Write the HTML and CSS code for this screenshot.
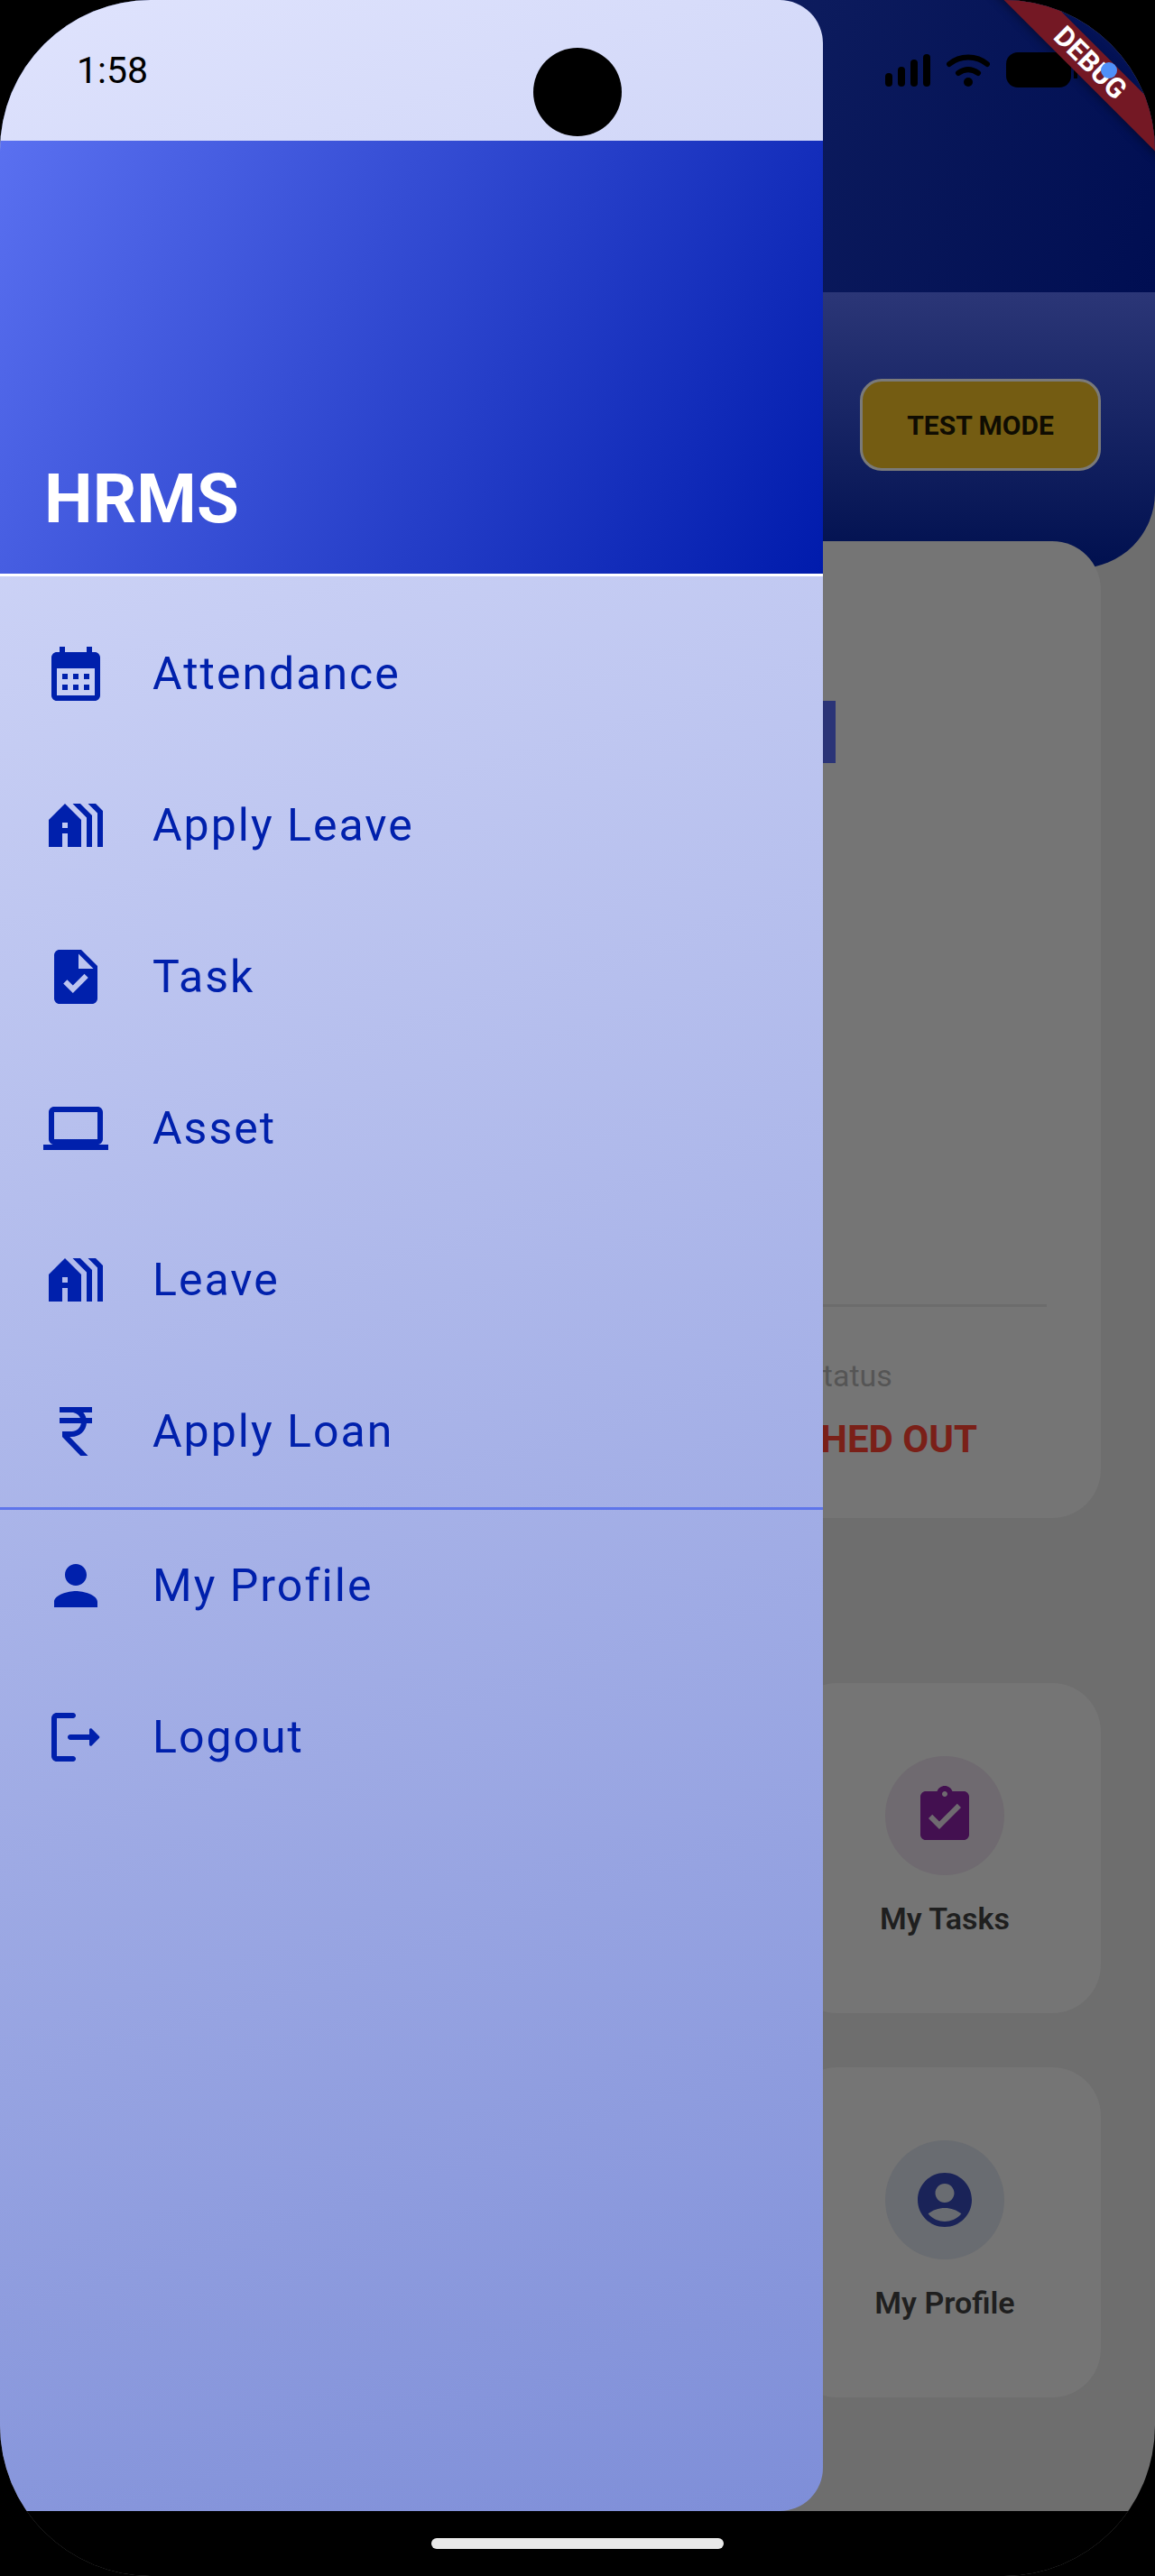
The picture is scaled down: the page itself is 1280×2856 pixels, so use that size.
FILE: index.html
```html
<!DOCTYPE html>
<html lang="en">
<head>
    <meta charset="UTF-8">
    <meta name="viewport" content="width=device-width, initial-scale=1.0">
    <title>HRMS</title>
    <link rel="stylesheet" href="styles.css">
</head>
<body>
    <div class="screen">
        <!-- page behind the drawer -->
        <div class="app">
            <div class="app-top"></div>
            <div class="app-sub">
                <div class="test-mode">TEST MODE</div>
            </div>
            <div class="main-card">
                <div class="card-accent"></div>
                <div class="card-divider"></div>
                <div class="card-status">
                    <div class="status-col">
                        <span class="status-label">Status</span>
                        <span class="status-value">PUNCHED OUT</span>
                    </div>
                </div>
            </div>
            <div class="tiles">
                <div class="tile"></div>
                <div class="tile">
                    <div class="tile-circle circle-purple">
                        <svg class="icon" viewBox="0 0 24 24"><path d="M19 3h-4.18C14.4 1.84 13.3 1 12 1c-1.3 0-2.4.84-2.82 2H5c-1.1 0-2 .9-2 2v14c0 1.1.9 2 2 2h14c1.1 0 2-.9 2-2V5c0-1.1-.9-2-2-2zm-7 0c.55 0 1 .45 1 1s-.45 1-1 1-1-.45-1-1 .45-1 1-1zm-2 14l-4-4 1.41-1.41L10 14.17l6.59-6.59L18 9l-8 8z"/></svg>
                    </div>
                    <span class="tile-label">My Tasks</span>
                </div>
                <div class="tile"></div>
                <div class="tile">
                    <div class="tile-circle circle-navy">
                        <svg class="icon" viewBox="0 0 24 24"><path d="M12 2C6.48 2 2 6.48 2 12s4.48 10 10 10 10-4.48 10-10S17.52 2 12 2zm0 4c1.93 0 3.5 1.57 3.5 3.5S13.93 13 12 13s-3.5-1.57-3.5-3.5S10.07 6 12 6zm0 14c-2.03 0-4.43-.82-6.14-2.88C7.55 15.8 9.68 15 12 15s4.45.8 6.14 2.12C16.43 19.18 14.03 20 12 20z"/></svg>
                    </div>
                    <span class="tile-label">My Profile</span>
                </div>
            </div>
        </div>

        <!-- status bar icons on the right -->
        <div class="status-icons">
            <div class="signal">
                <span class="bar bar-1"></span>
                <span class="bar bar-2"></span>
                <span class="bar bar-3"></span>
                <span class="bar bar-4"></span>
            </div>
            <svg class="wifi" viewBox="0 0 48 36">
                <path class="wifi-arc" d="M3 11C15 1 33 1 45 11"/>
                <path class="wifi-arc" d="M13 21C20 16 28 16 35 21"/>
                <circle cx="24" cy="31" r="5"/>
            </svg>
            <div class="battery"></div>
            <div class="battery-nub"></div>
        </div>

        <aside class="drawer">
            <div class="drawer-status">
                <span class="time">1:58</span>
            </div>
            <div class="drawer-header">
                <h1>HRMS</h1>
            </div>
            <div class="header-line"></div>
            <ul class="menu">
                <li>
                    <svg class="icon" viewBox="0 0 24 24"><path d="M19 4h-1V2h-2v2H8V2H6v2H5c-1.1 0-2 .9-2 2v14c0 1.1.9 2 2 2h14c1.1 0 2-.9 2-2V6c0-1.1-.9-2-2-2zm0 16H5V10h14v10zM9 14H7v-2h2v2zm4 0h-2v-2h2v2zm4 0h-2v-2h2v2zm-8 4H7v-2h2v2zm4 0h-2v-2h2v2zm4 0h-2v-2h2v2z"/></svg>
                    <span>Attendance</span>
                </li>
                <li>
                    <svg class="icon" viewBox="0 0 24 24"><path d="M8 4l-6 6v10h5v-5h2v5h5V10L8 4zm1 9H7v-2h2v2zM18 20V8.34L13.66 4h-2.83L16 9.17V20h2zM22 20V6.66L19.34 4h-2.83L20 7.49V20h2z"/></svg>
                    <span>Apply Leave</span>
                </li>
                <li>
                    <svg class="icon" viewBox="0 0 24 24"><path d="M14 2H6c-1.1 0-1.99.9-1.99 2L4 20c0 1.1.89 2 1.99 2H18c1.1 0 2-.9 2-2V8l-6-6zm-3.06 16L7.4 14.46l1.41-1.41 2.12 2.12 4.24-4.24 1.41 1.41L10.94 18zM13 9V3.5L18.5 9H13z"/></svg>
                    <span>Task</span>
                </li>
                <li>
                    <svg class="icon" viewBox="0 0 24 24"><path d="M20 18c1.1 0 1.99-.9 1.99-2L22 6c0-1.1-.9-2-2-2H4c-1.1 0-2 .9-2 2v10c0 1.1.9 2 2 2H0v2h24v-2h-4zM4 6h16v10H4V6z"/></svg>
                    <span>Asset</span>
                </li>
                <li>
                    <svg class="icon" viewBox="0 0 24 24"><path d="M8 4l-6 6v10h5v-5h2v5h5V10L8 4zm1 9H7v-2h2v2zM18 20V8.34L13.66 4h-2.83L16 9.17V20h2zM22 20V6.66L19.34 4h-2.83L20 7.49V20h2z"/></svg>
                    <span>Leave</span>
                </li>
                <li>
                    <svg class="icon" viewBox="0 0 24 24"><path d="M13.66 7C13.1 5.82 11.9 5 10.5 5H6V3h12v2h-3.26c.48.58.84 1.26 1.05 2H18v2h-2.02c-.25 2.8-2.61 5-5.48 5h-.73l6.73 7h-2.77L7 14v-2h3.5c1.76 0 3.22-1.3 3.46-3H6V7h7.66z"/></svg>
                    <span>Apply Loan</span>
                </li>
            </ul>
            <div class="menu-line"></div>
            <ul class="menu menu-bottom">
                <li>
                    <svg class="icon" viewBox="0 0 24 24"><path d="M12 12c2.21 0 4-1.79 4-4s-1.79-4-4-4-4 1.79-4 4 1.79 4 4 4zm0 2c-2.67 0-8 1.34-8 4v2h16v-2c0-2.66-5.33-4-8-4z"/></svg>
                    <span>My Profile</span>
                </li>
                <li>
                    <svg class="icon" viewBox="0 0 24 24"><path d="M5 5h6c.55 0 1-.45 1-1s-.45-1-1-1H5c-1.1 0-2 .9-2 2v14c0 1.1.9 2 2 2h6c.55 0 1-.45 1-1s-.45-1-1-1H5V5z"/><path d="M20.65 11.65l-2.79-2.79c-.32-.32-.86-.1-.86.35V11h-7c-.55 0-1 .45-1 1s.45 1 1 1h7v1.79c0 .45.54.67.85.35l2.79-2.79c.2-.19.2-.51.01-.7z"/></svg>
                    <span>Logout</span>
                </li>
            </ul>
        </aside>

        <div class="camera"></div>
        <div class="debug-banner">DEBUG</div>
        <div class="blue-dot"></div>

        <div class="nav-bar">
            <div class="home-pill"></div>
        </div>
    </div>
</body>
</html>
```

FILE: styles.css
```css
* {
    box-sizing: border-box;
}
html, body {
    margin: 0;
    padding: 0;
    background-color: #000;
}
body {
    width: 1280px;
    height: 2856px;
    overflow: hidden;
    font-family: Roboto, "Liberation Sans", sans-serif;
}
.screen {
    position: relative;
    width: 1280px;
    height: 2856px;
    border-radius: 167px;
    overflow: hidden;
    background-color: #6e6e6e;
}
.icon {
    display: block;
    width: 72px;
    height: 72px;
    fill: currentColor;
    flex-shrink: 0;
}

/* page behind the drawer */
.app-top {
    height: 324px;
    background: linear-gradient(110deg, #0d1c5e 62%, #000e52 100%);
}
.app-sub {
    height: 306px;
    padding: 96px 60px 0 0;
    display: flex;
    justify-content: flex-end;
    align-items: flex-start;
    background: linear-gradient(180deg, #2b3677, #00104f);
    border-radius: 0 0 84px 84px;
}
.test-mode {
    width: 267px;
    height: 102px;
    display: flex;
    align-items: center;
    justify-content: center;
    background-color: #745c12;
    border: 3px solid #7a7a7a;
    border-radius: 24px;
    color: #0f0c02;
    font-size: 30px;
    font-weight: 700;
}
.main-card {
    margin: -30px 60px 0;
    height: 1083px;
    padding: 177px 60px 0;
    background-color: #757575;
    border-radius: 54px;
}
.card-accent {
    width: 60px;
    height: 69px;
    margin-left: 746px;
    background-color: #2b3477;
}
.card-divider {
    height: 3px;
    margin-top: 600px;
    background-color: #6c6c6c;
}
.card-status {
    display: flex;
    justify-content: flex-end;
    padding: 56px 77px 0 0;
}
.status-col {
    display: flex;
    flex-direction: column;
    align-items: center;
    gap: 26px;
}
.status-label {
    color: #555;
    font-size: 34px;
}
.status-value {
    color: #7a2018;
    font-size: 42px;
    font-weight: 700;
}
.tiles {
    margin: 183px 60px 0;
    display: grid;
    grid-template-columns: 786px 346px;
    grid-auto-rows: 366px;
    gap: 60px 28px;
}
.tile {
    padding-top: 81px;
    display: flex;
    flex-direction: column;
    align-items: center;
    background-color: #757575;
    border-radius: 54px;
}
.tile-circle {
    width: 132px;
    height: 132px;
    border-radius: 50%;
    display: flex;
    align-items: center;
    justify-content: center;
}
.circle-purple {
    background-color: #6f6a70;
    color: #431050;
}
.circle-navy {
    background-color: #696c71;
    color: #1a2358;
}
.tile-label {
    margin-top: 28px;
    color: #1f1f1f;
    font-size: 34px;
    font-weight: 600;
}

/* status bar */
.status-icons {
    position: absolute;
    top: 58px;
    left: 981px;
    display: flex;
    align-items: center;
}
.signal {
    display: flex;
    align-items: flex-end;
    gap: 6px;
    height: 36px;
    margin-right: 18px;
}
.bar {
    width: 8px;
    border-radius: 4px;
    background-color: #000;
}
.bar-1 { height: 15px; }
.bar-2 { height: 22px; }
.bar-3 { height: 30px; }
.bar-4 { height: 36px; }
.wifi {
    width: 48px;
    height: 36px;
    margin-right: 18px;
}
.wifi-arc {
    fill: none;
    stroke: #000;
    stroke-width: 6;
    stroke-linecap: round;
}
.battery {
    width: 72px;
    height: 39px;
    border-radius: 13px;
    background-color: #000;
}
.battery-nub {
    width: 4px;
    height: 18px;
    margin-left: 3px;
    background-color: #000;
}
.camera {
    position: absolute;
    left: 591px;
    top: 53px;
    width: 98px;
    height: 98px;
    border-radius: 50%;
    background-color: #000;
}
.debug-banner {
    position: absolute;
    left: 1008px;
    top: 52px;
    width: 400px;
    height: 36px;
    transform: rotate(45deg);
    background-color: #741824;
    box-shadow: 0 3px 10px rgba(0, 0, 0, 0.35);
    color: #fff;
    font-size: 31px;
    font-weight: 700;
    line-height: 36px;
    text-align: center;
}
.blue-dot {
    position: absolute;
    left: 1220px;
    top: 69px;
    width: 18px;
    height: 18px;
    border-radius: 50%;
    background-color: #4f90f8;
}

/* drawer */
.drawer {
    position: absolute;
    left: 0;
    top: 0;
    width: 912px;
    height: 2784px;
    border-radius: 0 48px 48px 0;
    overflow: hidden;
    background: linear-gradient(161.9deg, #dfe3fd, #7e8ed8);
}
.drawer-status {
    height: 156px;
    padding: 54px 0 0 85px;
}
.time {
    color: #000;
    font-size: 41px;
    line-height: 48px;
}
.drawer-header {
    height: 480px;
    padding: 0 49px 41px;
    display: flex;
    align-items: flex-end;
    background: linear-gradient(117.8deg, #5a70f0, #001bac);
}
.drawer-header h1 {
    margin: 0;
    color: #fff;
    font-size: 76px;
    font-weight: 700;
    line-height: 84px;
}
.header-line {
    height: 3px;
    background-color: #fff;
}
.menu {
    list-style: none;
    margin: 0;
    padding: 24px 0 0;
    color: #0020ac;
}
.menu li {
    height: 168px;
    padding-left: 48px;
    display: flex;
    align-items: center;
    gap: 49px;
    font-size: 50px;
    letter-spacing: 2px;
}
.menu-bottom {
    padding-top: 0;
}
.menu-line {
    height: 3px;
    background-color: #5e75ea;
}

/* bottom navigation */
.nav-bar {
    position: absolute;
    left: 0;
    right: 0;
    bottom: 0;
    height: 72px;
    padding-top: 30px;
    display: flex;
    justify-content: center;
    background-color: #000;
}
.home-pill {
    width: 324px;
    height: 12px;
    border-radius: 6px;
    background-color: #e9e9e9;
}
```
